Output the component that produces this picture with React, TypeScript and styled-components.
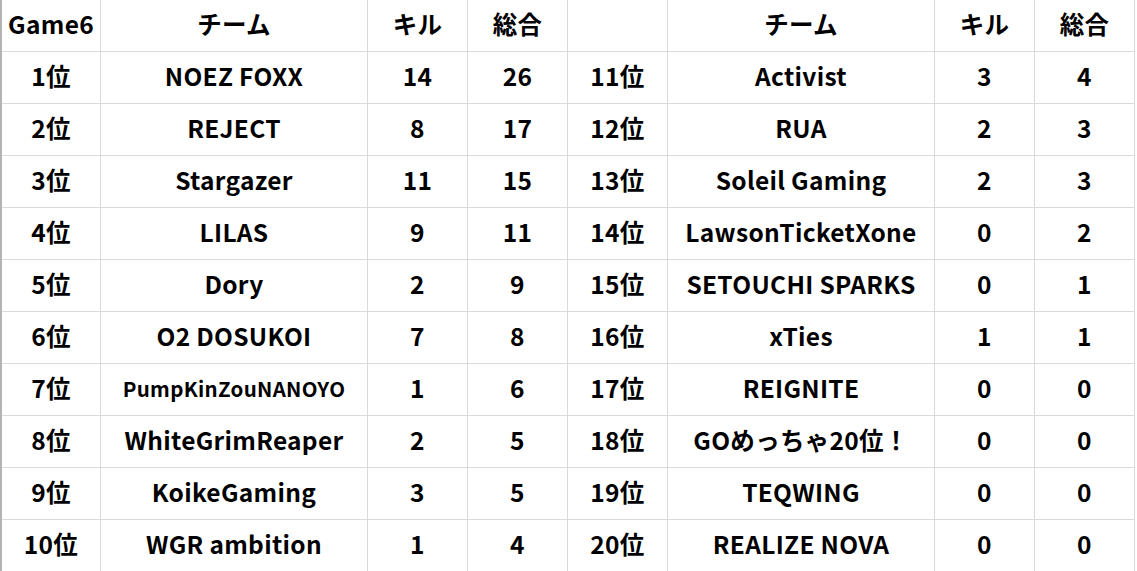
import { createGlobalStyle } from "styled-components";
import styled from "styled-components";

const GlobalStyle = createGlobalStyle`
  html, body {
    margin: 0;
    padding: 0;
    background: #ffffff;
  }
`;

const Sheet = styled("div")({
  display: "grid",
  gridTemplateColumns: "98px 266px 99px 99px 99px 266px 99px 99px",
  gridAutoRows: "51px",
  gap: "1px",
  width: "fit-content",
  backgroundColor: "#dadada",
  borderLeft: "2px solid #b3b3b3",
  borderRight: "1px solid #dadada",
  fontFamily: '"Noto Sans CJK JP", "Noto Sans", sans-serif',
  fontWeight: 700,
  color: "#000000",
});

const Cell = styled("div")<{ $small?: boolean }>(({ $small = false }) => ({
  backgroundColor: "#ffffff",
  display: "flex",
  alignItems: "center",
  justifyContent: "center",
  paddingBottom: "2px",
  fontSize: $small ? "20.5px" : "24.5px",
  lineHeight: 1,
  whiteSpace: "nowrap",
  overflow: "hidden",
  letterSpacing: "0.3px",
}));

type Row = [string, string, number, number];

const left: Row[] = [
  ["1位", "NOEZ FOXX", 14, 26],
  ["2位", "REJECT", 8, 17],
  ["3位", "Stargazer", 11, 15],
  ["4位", "LILAS", 9, 11],
  ["5位", "Dory", 2, 9],
  ["6位", "O2 DOSUKOI", 7, 8],
  ["7位", "PumpKinZouNANOYO", 1, 6],
  ["8位", "WhiteGrimReaper", 2, 5],
  ["9位", "KoikeGaming", 3, 5],
  ["10位", "WGR ambition", 1, 4],
];

const right: Row[] = [
  ["11位", "Activist", 3, 4],
  ["12位", "RUA", 2, 3],
  ["13位", "Soleil Gaming", 2, 3],
  ["14位", "LawsonTicketXone", 0, 2],
  ["15位", "SETOUCHI SPARKS", 0, 1],
  ["16位", "xTies", 1, 1],
  ["17位", "REIGNITE", 0, 0],
  ["18位", "GOめっちゃ20位！", 0, 0],
  ["19位", "TEQWING", 0, 0],
  ["20位", "REALIZE NOVA", 0, 0],
];

const smallNames = ["PumpKinZouNANOYO"];

const App = () => {
  return (
    <>
      <GlobalStyle />
      <Sheet>
        <Cell>Game6</Cell>
        <Cell>チーム</Cell>
        <Cell>キル</Cell>
        <Cell>総合</Cell>
        <Cell />
        <Cell>チーム</Cell>
        <Cell>キル</Cell>
        <Cell>総合</Cell>
        {left.map((row, i) => {
          const other = right[i];
          return [row, other].map((r) => (
            <>
              <Cell key={r[0]}>{r[0]}</Cell>
              <Cell $small={smallNames.includes(r[1])}>{r[1]}</Cell>
              <Cell>{r[2]}</Cell>
              <Cell>{r[3]}</Cell>
            </>
          ));
        })}
      </Sheet>
    </>
  );
};

export default App;
